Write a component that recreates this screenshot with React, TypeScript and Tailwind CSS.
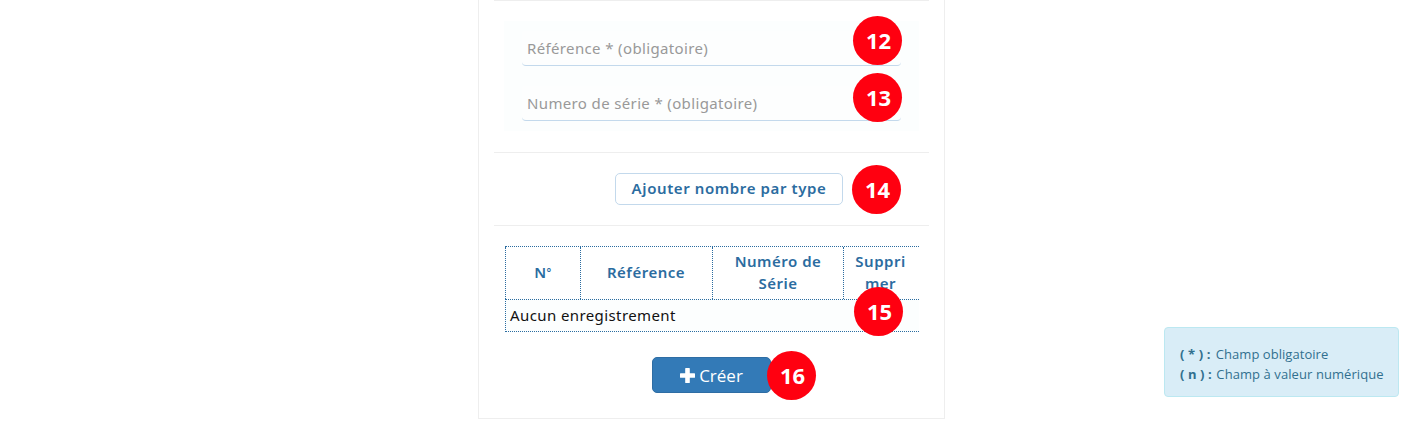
import React from "react";

function Badge({ n, className }: { n: number; className: string }) {
  return (
    <span
      className={`absolute z-10 flex h-[49px] w-[49px] items-center justify-center rounded-full bg-[#ff0010] pb-px pl-[2px] font-['Noto_Sans',sans-serif] text-[22px] leading-none font-bold text-white ${className}`}
    >
      {n}
    </span>
  );
}

function Field({ placeholder, badge }: { placeholder: string; badge: React.ReactNode }) {
  return (
    <div className="relative h-[55px] bg-[#fcfefe] px-[18px] pt-[10px]">
      <input
        type="text"
        placeholder={placeholder}
        className="block h-[35px] w-full rounded border-b border-[#c3d9ec] bg-[#fdfefe] px-[5px] text-[15px] tracking-[0.36px] text-[#555] outline-none placeholder:text-[#999]"
      />
      {badge}
    </div>
  );
}

export default function App() {
  return (
    <div className="flex h-[423px] w-[1424px] items-start overflow-hidden bg-white font-['Noto_Sans',sans-serif]">
      <main className="ml-[478px] h-[419px] w-[467px] shrink-0 border-x border-b border-[#eee] px-[15px]">
        <section className="h-[153px] border-y border-[#eee] px-[10px] pt-[20px]">
          <Field placeholder="Référence * (obligatoire)" badge={<Badge n={12} className="top-[-5px] left-[349px]" />} />
          <Field placeholder="Numero de série * (obligatoire)" badge={<Badge n={13} className="top-[-3px] left-[349px]" />} />
        </section>

        <section className="relative h-[73px] border-b border-[#eee] pt-[20px] pl-[121px]">
          <button className="block h-[32px] w-[228px] rounded-[5px] border border-[#c3d9ec] bg-white text-[15px] font-semibold tracking-[0.6px] text-[#2b6ca0]">
            <span className="block pb-[2px] leading-[28px] whitespace-nowrap">Ajouter nombre par type</span>
          </button>
          <Badge n={14} className="top-[12px] left-[358px]" />
        </section>

        <section className="relative mt-[20px] ml-[10px] w-[415px]">
          <div className="ml-px grid h-[53px] grid-cols-[75px_132px_131px_75px] border-t border-dotted border-[#2b6ca0] text-center text-[15px] leading-[22px] font-semibold tracking-[0.5px] text-[#2b6ca0]">
            <div className="flex items-center justify-center border-l border-dotted border-[#2b6ca0] pb-[2px]">
              N<span className="text-[11px]">°</span>
            </div>
            <div className="flex items-center justify-center border-l border-dotted border-[#2b6ca0] pr-px pb-[2px]">Référence</div>
            <div className="flex items-center justify-center border-l border-dotted border-[#2b6ca0] px-4 pb-[2px]">Numéro de Série</div>
            <div className="flex items-center justify-center border-l border-dotted border-[#2b6ca0] pr-px pb-[2px]">
              <span>Suppri<br />mer</span>
            </div>
          </div>
          <div className="ml-px h-[33px] border-y border-l border-dotted border-[#2b6ca0] bg-[#fcfefe] pl-[4px] text-[15px] leading-[31px] tracking-[0.4px] text-[#111]">
            Aucun enregistrement
          </div>
          <Badge n={15} className="top-[41px] left-[350px]" />
        </section>

        <div className="relative mt-[25px] ml-[158px] w-[120px]">
          <button className="flex h-[36px] w-[119px] items-center justify-center gap-[4px] rounded-[5px] border border-[#2e6da4] bg-[#337ab7] font-['Open_Sans',sans-serif] text-[17px] text-white">
            <svg viewBox="0 0 15 15" className="h-[15px] w-[15px]" fill="currentColor">
              <path d="M5.8 0h3.4q.6 0 .6.6v4.6h4.6q.6 0 .6.6v3.4q0 .6-.6.6H9.8v4.6q0 .6-.6.6H5.8q-.6 0-.6-.6V9.8H.6Q0 9.8 0 9.2V5.8q0-.6.6-.6h4.6V.6q0-.6.6-.6Z" />
            </svg>
            <span className="pt-px">Créer</span>
          </button>
          <Badge n={16} className="top-[-6px] left-[115px]" />
        </div>
      </main>

      <aside className="mt-[327px] ml-[219px] h-[70px] w-[235px] shrink-0 rounded border border-[#bce8f1] bg-[#d9edf7] pt-[16px] pl-[15px] font-['Open_Sans',sans-serif] text-[13px] leading-[20px] whitespace-nowrap text-[#31708f]">
        <p className="tracking-[0.04px]"><b className="mr-[2px] tracking-[0.1px]">( * ) :</b> Champ obligatoire</p>
        <p className="tracking-[0.08px]"><b className="mr-px tracking-[0.1px]">( n ) :</b> Champ à valeur numérique</p>
      </aside>
    </div>
  );
}
